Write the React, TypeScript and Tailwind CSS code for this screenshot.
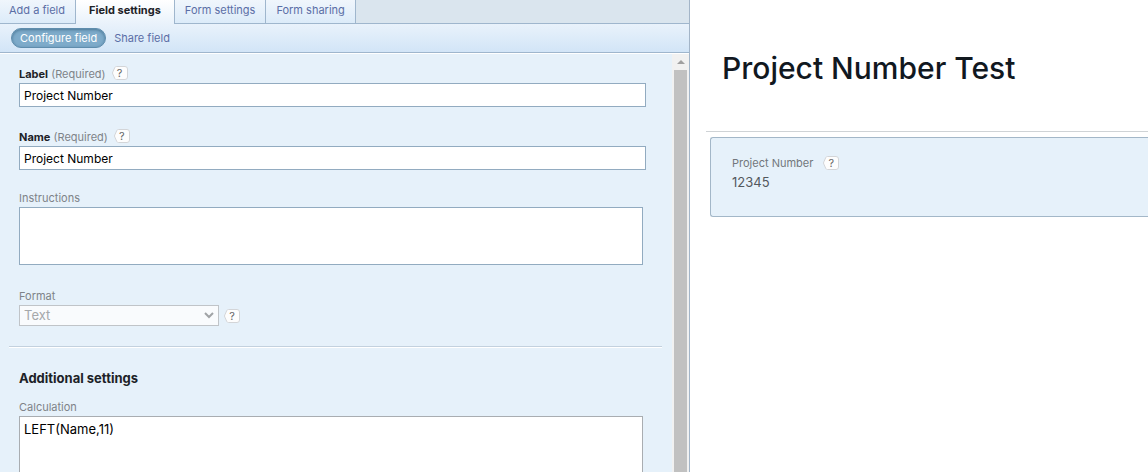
import type { ReactNode } from 'react'

const tabs = ['Add a field', 'Field settings', 'Form settings', 'Form sharing']
const activeTab = 'Field settings'

/**
 * Small question mark tag shown beside a label
 */
function HelpButton({ topic }: { topic: string }) {
  return (
    <button
      type="button"
      aria-label={`Help: ${topic}`}
      className="relative flex justify-center items-center w-4 h-3.5 text-[#666] text-[11px] leading-3"
    >
      <svg
        className="absolute inset-0 w-4 h-3.5"
        viewBox="0 0 16 14"
        fill="#fdfdfd"
        stroke="#d3d5d8"
        aria-hidden="true"
      >
        <path d="M4.500 .5h8.500a2.500 2.500 0 0 1 2.500 2.500v8a2.500 2.500 0 0 1-2.500 2.500H4.500a2 2 0 0 1-1.700-1L.9 8.200a2 2 0 0 1 0-2.400L2.800 1.500A2 2 0 0 1 4.500 .5z" />
      </svg>
      <span className="relative">?</span>
    </button>
  )
}

function FieldLabel({
  htmlFor,
  required,
  children,
}: {
  htmlFor: string
  required?: boolean
  children: ReactNode
}) {
  return (
    <div className="flex items-start gap-1.5 h-[17px]">
      <label htmlFor={htmlFor} className="text-[#7e8388] text-[11px] leading-4">
        {required ? (
          <>
            <strong className="font-bold text-[#1d2227]">{children}</strong>{' '}
            (Required)
          </>
        ) : (
          children
        )}
      </label>
      {required && <HelpButton topic={String(children)} />}
    </div>
  )
}

/**
 * Form builder: field settings on the left, form preview on the right
 */
export default function App() {
  return (
    <div className="grid grid-cols-[690fr_458fr] bg-white h-screen overflow-hidden font-[Inter,'Open_Sans',sans-serif]">
      {/* Settings panel */}
      <section className="flex flex-col bg-[#e6f1fa] border-[#a3b5c8] border-r min-w-0 min-h-0">
        {/* Tabs */}
        <nav className="flex bg-[#dae5ee] h-6 shrink-0">
          {tabs.map((tab) => (
            <a
              key={tab}
              href="#"
              aria-current={tab === activeTab ? 'page' : undefined}
              className={
                tab === activeTab
                  ? 'bg-linear-to-b from-white to-[#e9f2fb] pt-0.5 px-[13px] border-[#9fb6cd] border-r font-bold text-[#1d2227] text-[11px] leading-4'
                  : 'bg-linear-to-b from-[#f0f6fc] to-[#dcebf9] pt-0.5 px-2.5 border-[#9fb6cd] border-r border-b text-[#5b6ea6] text-[11px] leading-4 first:pl-[9px]'
              }
            >
              {tab}
            </a>
          ))}
          <div className="flex-1 border-[#9fb6cd] border-b" />
        </nav>

        {/* Sub navigation */}
        <nav className="flex items-center gap-2 bg-linear-to-b from-[#e9f2fb] to-[#d2e5f7] px-[11px] border-[#9fb6cd] border-b h-[29px] text-[11px] shrink-0">
          <a
            href="#"
            aria-current="page"
            className="bg-[#7eabca] shadow-[inset_0_1px_3px_#4b7896] px-2 border border-[#5f8dad] rounded-full h-5 text-white leading-[18px]"
          >
            Configure field
          </a>
          <a href="#" className="text-[#5b6ea6] leading-5">
            Share field
          </a>
        </nav>

        <div className="flex flex-1 border-white border-t min-h-0">
          {/* Field form */}
          <form className="flex-1 pt-3 pr-2.5 pl-[9px] min-w-0 overflow-hidden">
            <div className="pr-4 pl-2.5">
              <FieldLabel htmlFor="label" required>
                Label
              </FieldLabel>
              <input
                id="label"
                type="text"
                defaultValue="Project Number"
                className="block bg-white px-1 border border-[#92abc0] w-full h-6 text-black text-xs"
              />
            </div>

            <div className="mt-[22px] pr-4 pl-2.5">
              <FieldLabel htmlFor="name" required>
                Name
              </FieldLabel>
              <input
                id="name"
                type="text"
                defaultValue="Project Number"
                className="block bg-white px-1 border border-[#92abc0] w-full h-6 text-black text-xs"
              />
            </div>

            <div className="mt-5 pr-[19px] pl-2.5">
              <FieldLabel htmlFor="instructions">Instructions</FieldLabel>
              <textarea
                id="instructions"
                className="block bg-white px-1 py-1 border border-[#92abc0] w-full h-[58px] text-black text-xs resize-none"
              />
            </div>

            <div className="mt-[23px] pl-2.5">
              <FieldLabel htmlFor="format">Format</FieldLabel>
              <div className="flex items-center gap-[5px]">
                <div className="relative">
                  <select
                    id="format"
                    disabled
                    className="block bg-[#f9fbfd] px-1 border border-[#c0c4c8] w-[200px] h-[21px] text-[#a5a8ab] text-[13px] appearance-none"
                  >
                    <option>Text</option>
                  </select>
                  <svg
                    className="top-[7px] right-[5px] absolute w-2.5 h-2 pointer-events-none"
                    viewBox="0 0 10 8"
                    fill="none"
                    stroke="#a0a3a6"
                    strokeWidth="2"
                    aria-hidden="true"
                  >
                    <path d="M1 1l4 4 4-4" />
                  </svg>
                </div>
                <HelpButton topic="Format" />
              </div>
            </div>

            <hr className="mt-5 border-[#c3d1de] border-t border-b border-b-white h-0.5" />

            <div className="mt-5 pr-[19px] pl-2.5">
              <h2 className="font-bold text-[#1d2227] text-[13px] leading-5">
                Additional settings
              </h2>
              <div className="mt-[11px]">
                <FieldLabel htmlFor="calculation">Calculation</FieldLabel>
                <textarea
                  id="calculation"
                  defaultValue="LEFT(Name,11)"
                  className="block bg-white px-1 py-0.5 border border-[#a9adb1] w-full h-24 text-[13px] text-black leading-5 resize-none"
                />
              </div>
            </div>
          </form>

          {/* Scroll bar */}
          <div className="flex flex-col items-center bg-[#f1f1f1] w-[17px] shrink-0">
            <button
              type="button"
              aria-label="Scroll up"
              className="flex justify-center items-center w-full h-4 shrink-0"
            >
              <svg
                className="w-2 h-1"
                viewBox="0 0 8 4"
                fill="#a0a0a0"
                aria-hidden="true"
              >
                <path d="M0 4l4-4 4 4z" />
              </svg>
            </button>
            <div className="flex-1 bg-[#c1c1c1] w-[13px]" />
          </div>
        </div>
      </section>

      {/* Form preview */}
      <main className="pl-4 min-w-0">
        <h1 className="pt-12 pb-[43px] pl-4 border-[#cfd3d6] border-b font-medium text-[#11181f] text-[30px] leading-10 whitespace-nowrap">
          Project Number Test
        </h1>
        <div className="bg-[#e6f1fa] mt-[5px] ml-1 pt-4 pl-[21px] border border-[#a3b7c8] border-r-0 rounded-l-[3px] h-20">
          <div className="flex items-center gap-2.5 h-[18px]">
            <h3 className="text-[#72777c] text-[11px]">Project Number</h3>
            <HelpButton topic="Project Number" />
          </div>
          <p className="text-[#53585d] text-[13px] leading-5">12345</p>
        </div>
      </main>
    </div>
  )
}
